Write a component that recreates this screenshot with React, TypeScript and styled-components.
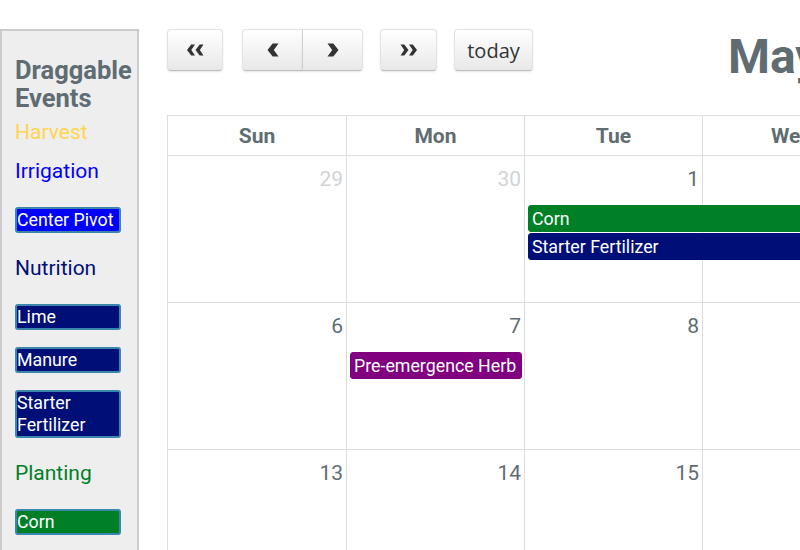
import React from "react";
import styled, { createGlobalStyle } from "styled-components";

const GlobalStyle = createGlobalStyle`
  html, body { margin: 0; padding: 0; background: #fff; overflow: hidden; }
  body { width: 800px; height: 550px; font-family: Roboto, "Liberation Sans", sans-serif; }
`;

const TEXT = "#5f6c72";
const COLS = "179px repeat(6, 178px)";

const Page = styled.div`
  display: flex;
  align-items: flex-start;
  width: max-content;
`;

const Sidebar = styled.aside`
  box-sizing: border-box;
  margin-top: 29px;
  width: 139px;
  height: 560px;
  border: 2px solid #ccc;
  background: #eee;
  padding: 25px 16px 0 13px;
`;

const SideTitle = styled.h4`
  margin: 0 0 9px;
  font-size: 25.5px;
  line-height: 28px;
  font-weight: 700;
  color: ${TEXT};
`;

const Groups = styled.div`
  display: flex;
  flex-direction: column;
  gap: 16px;
`;

const Group = styled.div<{ $hasEvents: boolean }>`
  display: flex;
  flex-direction: column;
  gap: 17px;
  padding-bottom: ${(p) => (p.$hasEvents ? "8px" : "0")};
`;

const GroupHead = styled.div<{ $color: string; $hasEvents: boolean }>`
  font-size: 21px;
  line-height: 23px;
  color: ${(p) => p.$color};
  margin-bottom: ${(p) => (p.$hasEvents ? "7px" : "0")};
`;

const DragEvent = styled.div<{ $bg: string }>`
  box-sizing: border-box;
  width: 106px;
  border: 2px solid #3a87ad;
  border-radius: 3px;
  background: ${(p) => p.$bg};
  color: #fff;
  font-size: 17.8px;
  line-height: 22px;
  padding: 0;
`;

const Main = styled.main`
  margin-left: 28px;
  padding-top: 29px;
`;

const Toolbar = styled.div`
  display: flex;
  align-items: flex-start;
  height: 56px;
  margin-bottom: 30px;
`;

const BtnGroup = styled.div<{ $ml: number }>`
  display: flex;
  margin-left: ${(p) => p.$ml}px;
`;

const Btn = styled.button<{ $w: number; $pos?: "left" | "right" | "single" }>`
  box-sizing: border-box;
  width: ${(p) => p.$w}px;
  height: 42px;
  margin: 0;
  padding: 0;
  display: flex;
  align-items: center;
  justify-content: center;
  border: 1px solid;
  border-color: #e3e3e3 #e3e3e3 #bdbdbd;
  background: linear-gradient(#ffffff, #e8e8e8);
  box-shadow: inset 0 1px 0 rgba(255, 255, 255, 0.2), 0 1px 2px rgba(0, 0, 0, 0.1);
  color: #333;
  font-family: "Open Sans", "DejaVu Sans", sans-serif;
  font-size: 20px;
  border-radius: ${(p) =>
    p.$pos === "left" ? "4px 0 0 4px" : p.$pos === "right" ? "0 4px 4px 0" : "4px"};
  ${(p) => (p.$pos === "right" ? "border-left-color: #d0d0d0; margin-left: -1px;" : "")}
`;

const Title = styled.h2`
  margin: 0 0 0 195px;
  font-size: 48px;
  line-height: 56px;
  font-weight: 700;
  color: ${TEXT};
  white-space: nowrap;
`;

const Grid = styled.div`
  border-left: 1px solid #ddd;
  border-top: 1px solid #ddd;
  width: max-content;
`;

const HeadRow = styled.div`
  display: grid;
  grid-template-columns: ${COLS};
`;

const HeadCell = styled.div`
  box-sizing: border-box;
  height: 40px;
  border-right: 1px solid #ddd;
  border-bottom: 1px solid #ddd;
  display: flex;
  align-items: center;
  justify-content: center;
  font-size: 21px;
  font-weight: 700;
  color: ${TEXT};
`;

const Week = styled.div`
  box-sizing: border-box;
  display: grid;
  grid-template-columns: ${COLS};
  grid-template-rows: 49px 28px 28px 1fr;
  height: 147px;
  border-bottom: 1px solid #ddd;
`;

const DayBg = styled.div<{ $col: number }>`
  grid-column: ${(p) => p.$col};
  grid-row: 1 / -1;
  border-right: 1px solid #ddd;
`;

const DayNum = styled.div<{ $col: number; $other: boolean }>`
  grid-column: ${(p) => p.$col};
  grid-row: 1;
  padding: 11px 4px 0 0;
  text-align: right;
  font-size: 21px;
  line-height: 24px;
  color: ${(p) => (p.$other ? "#cfd4d7" : TEXT)};
`;

const CalEvent = styled.div<{ $bg: string; $col: number; $span: number; $row: number }>`
  grid-column: ${(p) => p.$col} / span ${(p) => p.$span};
  grid-row: ${(p) => p.$row};
  align-self: start;
  margin: 0 3px 2px 3px;
  border: 1px solid ${(p) => p.$bg};
  border-radius: 3px;
  background: ${(p) => p.$bg};
  color: #fff;
  font-size: 17.8px;
  line-height: 25px;
  padding: 0 3px;
  white-space: nowrap;
  overflow: hidden;
`;

const BLUE = "#0000ff";
const NAVY = "#000f78";
const GREEN = "#008026";
const PURPLE = "#800080";

const groups = [
  { name: "Harvest", color: "#ffd54f", bg: "", events: [] as string[] },
  { name: "Irrigation", color: BLUE, bg: BLUE, events: ["Center Pivot"] },
  { name: "Nutrition", color: NAVY, bg: NAVY, events: ["Lime", "Manure", "Starter Fertilizer"] },
  { name: "Planting", color: GREEN, bg: GREEN, events: ["Corn"] },
];

const days = ["Sun", "Mon", "Tue", "Wed", "Thu", "Fri", "Sat"];

const weeks = [
  { nums: [29, 30, 1, 2, 3, 4, 5], other: [true, true, false, false, false, false, false] },
  { nums: [6, 7, 8, 9, 10, 11, 12] },
  { nums: [13, 14, 15, 16, 17, 18, 19] },
  { nums: [20, 21, 22, 23, 24, 25, 26] },
];

const weekEvents: { week: number; title: string; bg: string; col: number; span: number; row: number }[] = [
  { week: 0, title: "Corn", bg: GREEN, col: 3, span: 5, row: 2 },
  { week: 0, title: "Starter Fertilizer", bg: NAVY, col: 3, span: 5, row: 3 },
  { week: 1, title: "Pre-emergence Herb", bg: PURPLE, col: 2, span: 1, row: 2 },
];

const Chevron = ({ dir }: { dir: "left" | "right" }) => (
  <svg width="12" height="14" viewBox="0 0 12 14">
    <polygon
      points={dir === "left" ? "11.5,0.5 6.8,7 11.5,13.5 5.7,13.5 0.5,7 5.7,0.5" : "0.5,0.5 5.2,7 0.5,13.5 6.3,13.5 11.5,7 6.3,0.5"}
      fill="#333"
    />
  </svg>
);

const DoubleChevron = ({ dir }: { dir: "left" | "right" }) => (
  <svg width="17" height="12" viewBox="0 0 17 12">
    {dir === "left" ? (
      <>
        <polygon points="8,0.5 4.3,6 8,11.5 4.2,11.5 0,6 4.2,0.5" fill="#333" />
        <polygon points="16.5,0.5 12.8,6 16.5,11.5 12.7,11.5 8.5,6 12.7,0.5" fill="#333" />
      </>
    ) : (
      <>
        <polygon points="0.5,0.5 4.2,6 0.5,11.5 4.3,11.5 8.5,6 4.3,0.5" fill="#333" />
        <polygon points="9,0.5 12.7,6 9,11.5 12.8,11.5 17,6 12.8,0.5" fill="#333" />
      </>
    )}
  </svg>
);

export default function App() {
  return (
    <>
      <GlobalStyle />
      <Page>
        <Sidebar>
          <SideTitle>Draggable Events</SideTitle>
          <Groups>
            {groups.map((g) => (
              <Group key={g.name} $hasEvents={g.events.length > 0}>
                <GroupHead $color={g.color} $hasEvents={g.events.length > 0}>
                  {g.name}
                </GroupHead>
                {g.events.map((e) => (
                  <DragEvent key={e} $bg={g.bg}>
                    {e}
                  </DragEvent>
                ))}
              </Group>
            ))}
          </Groups>
        </Sidebar>
        <Main>
          <Toolbar>
            <BtnGroup $ml={0}>
              <Btn $w={56} aria-label="prev year">
                <DoubleChevron dir="left" />
              </Btn>
            </BtnGroup>
            <BtnGroup $ml={19}>
              <Btn $w={61} $pos="left" aria-label="prev">
                <Chevron dir="left" />
              </Btn>
              <Btn $w={61} $pos="right" aria-label="next">
                <Chevron dir="right" />
              </Btn>
            </BtnGroup>
            <BtnGroup $ml={17}>
              <Btn $w={57} aria-label="next year">
                <DoubleChevron dir="right" />
              </Btn>
            </BtnGroup>
            <BtnGroup $ml={17}>
              <Btn $w={79}>today</Btn>
            </BtnGroup>
            <Title>May 2016</Title>
          </Toolbar>
          <Grid>
            <HeadRow>
              {days.map((d) => (
                <HeadCell key={d}>{d}</HeadCell>
              ))}
            </HeadRow>
            {weeks.map((w, wi) => (
              <Week key={wi}>
                {w.nums.map((n, i) => (
                  <DayBg key={"bg" + i} $col={i + 1} />
                ))}
                {w.nums.map((n, i) => (
                  <DayNum key={"n" + i} $col={i + 1} $other={!!(w.other && w.other[i])}>
                    {n}
                  </DayNum>
                ))}
                {weekEvents
                  .filter((e) => e.week === wi)
                  .map((e) => (
                    <CalEvent key={e.title} $bg={e.bg} $col={e.col} $span={e.span} $row={e.row}>
                      {e.title}
                    </CalEvent>
                  ))}
              </Week>
            ))}
          </Grid>
        </Main>
      </Page>
    </>
  );
}
